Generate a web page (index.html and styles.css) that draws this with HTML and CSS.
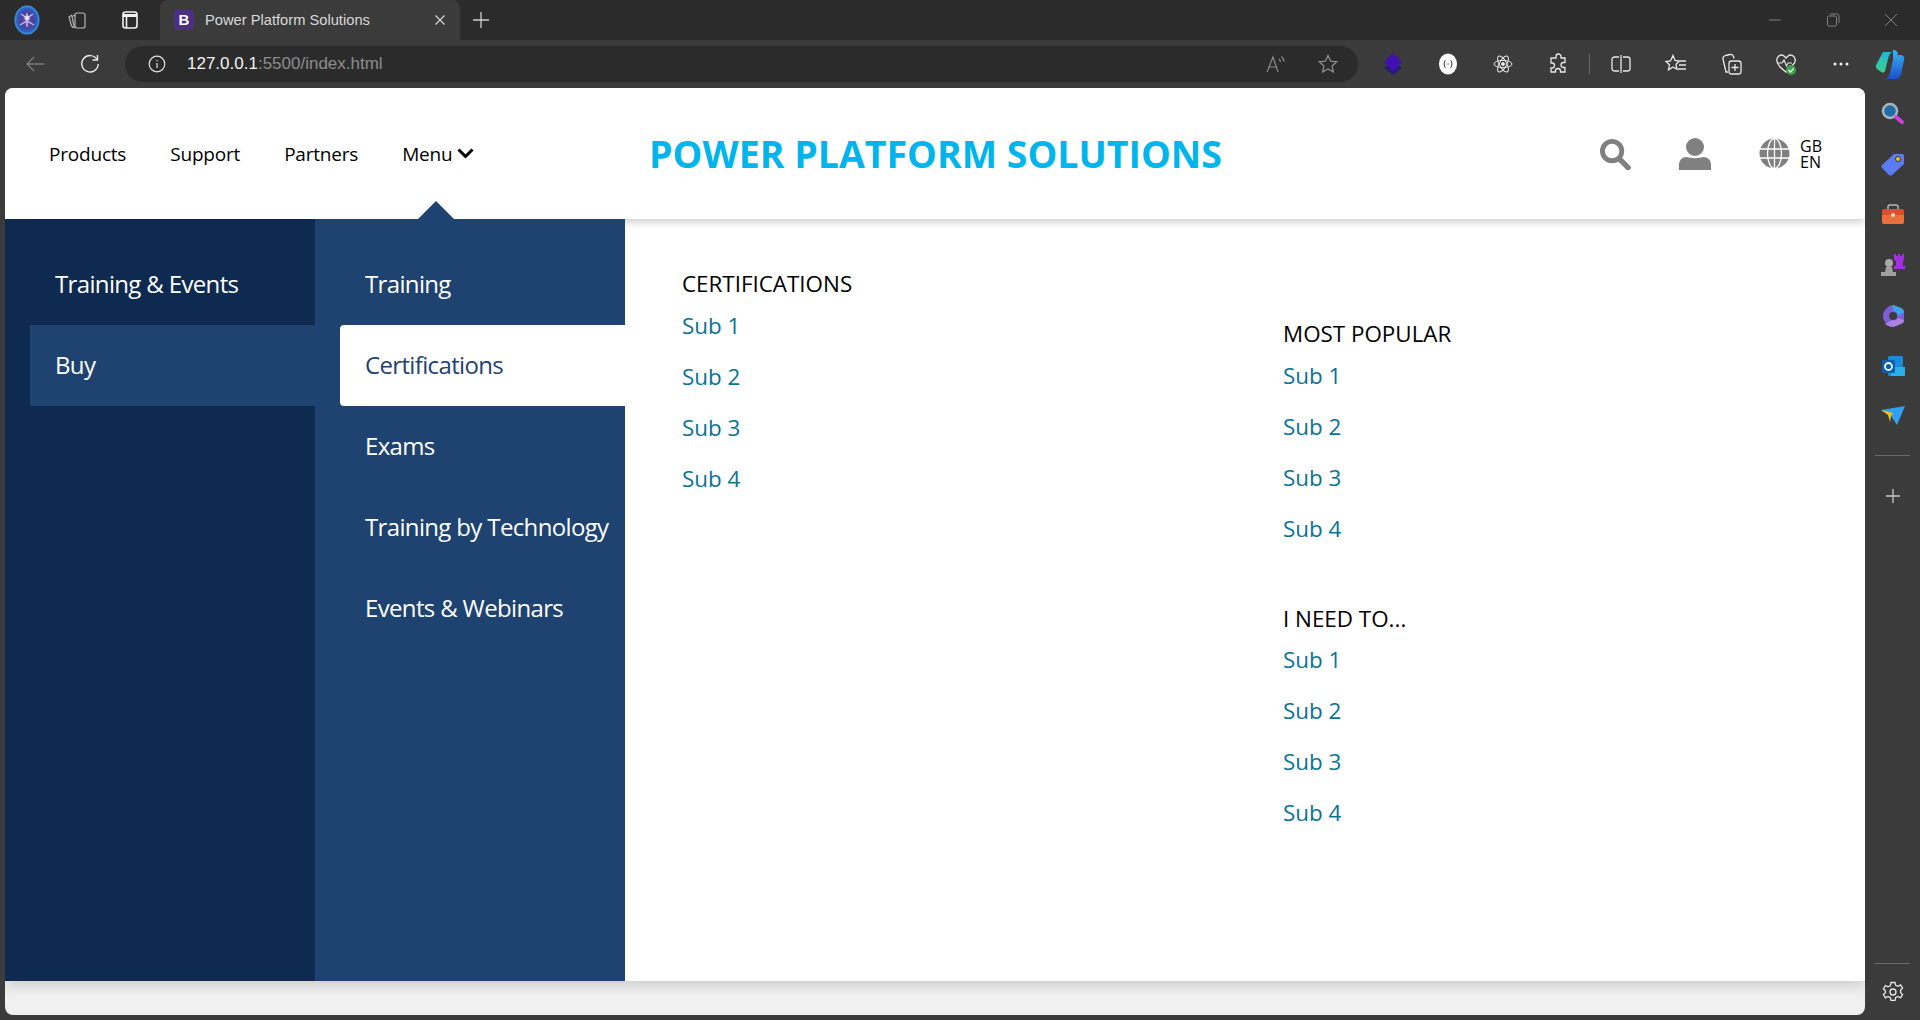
FILE: index.html
```html
<!DOCTYPE html>
<html lang="en">

<head>
    <meta charset="UTF-8">
    <meta name="viewport" content="width=device-width, initial-scale=1.0">
    <title>Power Platform Solutions</title>
    <link rel="stylesheet" href="styles.css">
</head>

<body>
    <div class="tabbar">
        <div class="tabbar-left">
            <svg class="avatar" width="26" height="30" viewBox="0 0 26 30">
                <defs>
                    <radialGradient id="av">
                        <stop offset="0" stop-color="#7a5ab0" />
                        <stop offset="0.5" stop-color="#4a3f9a" />
                        <stop offset="0.8" stop-color="#2b5fc0" />
                        <stop offset="1" stop-color="#3f9be8" />
                    </radialGradient>
                </defs>
                <ellipse cx="13" cy="15" rx="12.5" ry="14.5" fill="url(#av)" />
                <path d="M7 9l6 4 6-4M6 20l7-4 7 4M13 8v14" stroke="#c9bfe6" stroke-width="1.4" fill="none" />
                <circle cx="13" cy="13" r="2.500" fill="#e2dcf4" />
            </svg>
            <svg class="ti" width="20" height="22" viewBox="0 0 20 22" fill="none" stroke="#b5b5b5" stroke-width="1.2">
                <rect x="8" y="4" width="10" height="15" rx="2" />
                <path d="M8 6L5 7.500 7 17l1 2M5 6L2 8l2.500 9 2 2" />
            </svg>
            <svg class="ti" width="16" height="18" viewBox="0 0 16 18" fill="none" stroke="#f2f2f2" stroke-width="1.6">
                <rect x="1" y="1" width="14" height="16" rx="2.500" />
                <path d="M1 4.500h14" stroke-width="3" />
                <path d="M4.500 5v12" />
            </svg>
        </div>
        <div class="tab">
            <span class="tab-logo">B</span>
            <span class="tab-title">Power Platform Solutions</span>
            <svg width="12" height="12" viewBox="0 0 12 12" stroke="#d6d6d6" stroke-width="1.2">
                <path d="M1.500 1.500l9 9M10.500 1.500l-9 9" />
            </svg>
        </div>
        <svg class="newtab" width="18" height="18" viewBox="0 0 18 18" stroke="#d0d0d0" stroke-width="1.3">
            <path d="M9 1v16M1 9h16" />
        </svg>
        <div class="winbtns">
            <svg width="14" height="14" viewBox="0 0 14 14" stroke="#808080"><path d="M1 7h12" /></svg>
            <svg width="14" height="14" viewBox="0 0 14 14" stroke="#808080" fill="none">
                <rect x="1.500" y="3" width="9" height="10" rx="1.500" />
                <path d="M4 1h7a2 2 0 0 1 2 2v7" />
            </svg>
            <svg width="14" height="14" viewBox="0 0 14 14" stroke="#808080"><path d="M1 1l12 12M13 1L1 13" /></svg>
        </div>
    </div>

    <div class="toolbar">
        <svg class="back" width="20" height="18" viewBox="0 0 20 18" fill="none" stroke="#7c7c7c" stroke-width="1.3">
            <path d="M19 9H2M9 2L2 9l7 7" />
        </svg>
        <svg class="reload" width="20" height="20" viewBox="0 0 20 20" fill="none" stroke="#e8e8e8" stroke-width="1.4">
            <path d="M17 5.500A8.200 8.200 0 1 0 18.200 10" />
            <path d="M17.500 1v5h-5" />
        </svg>
        <div class="address">
            <svg width="18" height="18" viewBox="0 0 18 18" fill="none" stroke="#e0e0e0" stroke-width="1.2">
                <circle cx="9" cy="9" r="7.800" />
                <path d="M9 8v5M9 5v1.300" />
            </svg>
            <span class="url"><b>127.0.0.1</b>:5500/index.html</span>
            <span class="address-end">
                <svg width="22" height="20" viewBox="0 0 22 20" fill="none" stroke="#8a8a8a" stroke-width="1.2">
                    <path d="M1 18L7 3l5 15M3 13h7M13 5c1 1 1.500 2 1.500 3M15.500 2.500c1.500 1.500 2.500 3 2.500 5" />
                </svg>
                <svg width="20" height="20" viewBox="0 0 20 20" fill="none" stroke="#8a8a8a" stroke-width="1.3">
                    <path d="M10 1.500l2.600 5.600 6 .7-4.500 4.100 1.300 6L10 15l-5.400 2.900 1.300-6L1.400 7.800l6-.7z" />
                </svg>
            </span>
        </div>
        <div class="ext">
            <svg width="20" height="24" viewBox="0 0 20 24">
                <path d="M10 9l9 7-9 7-9-7z" fill="#261a78" />
                <path d="M10 1l9 9-9 9-9-9z" fill="#4310b0" />
            </svg>
            <svg width="20" height="22" viewBox="0 0 20 22">
                <ellipse cx="10" cy="11" rx="9" ry="10.500" fill="#fff" />
                <path d="M7.500 7.500c-1.500 0-.8 2.200-1.500 3.500.7 1.300 0 3.500 1.500 3.500M12.500 7.500c1.500 0 .8 2.200 1.500 3.500-.7 1.300 0 3.500-1.500 3.500" fill="none" stroke="#333" />
                <path d="M8.500 11h3" stroke="#666" stroke-dasharray="1 .5" />
            </svg>
            <svg width="20" height="20" viewBox="0 0 20 20" fill="none" stroke="#e8e8e8" stroke-width="1">
                <ellipse cx="10" cy="10" rx="9" ry="3.600" />
                <ellipse cx="10" cy="10" rx="9" ry="3.600" transform="rotate(60 10 10)" />
                <ellipse cx="10" cy="10" rx="9" ry="3.600" transform="rotate(120 10 10)" />
                <circle cx="10" cy="10" r="1.500" fill="#e8e8e8" />
            </svg>
            <svg width="20" height="22" viewBox="0 0 20 22" fill="none" stroke="#e8e8e8" stroke-width="1.3">
                <path d="M8 5V3.500a2.500 2.500 0 0 1 5 0V5h4v4.500h-1.500a2.500 2.500 0 0 0 0 5H17V19h-4.500v-1a2.500 2.500 0 0 0-5 0v1H3v-4h1a2.500 2.500 0 0 0 0-5H3V5z" />
            </svg>
            <span class="ext-sep"></span>
            <svg width="20" height="20" viewBox="0 0 20 20" fill="none" stroke="#e8e8e8" stroke-width="1.3">
                <path d="M8 3H3.500A2.500 2.500 0 0 0 1 5.500v9A2.500 2.500 0 0 0 3.500 17H8M12 3h4.500A2.500 2.500 0 0 1 19 5.500v9a2.500 2.500 0 0 1-2.500 2.500H12M10 1v18" />
            </svg>
            <svg class="wide" width="22" height="20" viewBox="0 0 22 20" fill="none" stroke="#e8e8e8" stroke-width="1.3">
                <path d="M8 1.500l2 5 4.500.5-3.500 3.300 1 5L8 13l-4.500 2.800 1-5L1 7.500 5.500 7zM15 7h6M14 11h7M13 15h8" />
            </svg>
            <svg class="wide" width="22" height="22" viewBox="0 0 22 22" fill="none" stroke="#e8e8e8" stroke-width="1.3">
                <path d="M8 19H6L3 6c-.5-2 1-3 2.500-3.500L10 1.500c1.500-.3 3 .5 3.500 2l.5 2" />
                <rect x="9" y="8" width="12" height="13" rx="2.500" />
                <path d="M15 11v7M11.500 14.500h7" />
            </svg>
            <svg class="wide" width="22" height="24" viewBox="0 0 22 24">
                <path d="M5 15L2.500 11C0 6 5 1 9 4l2 2 2-2c4-3 9 2 6.500 7L11 20z" fill="none" stroke="#e8e8e8" stroke-width="1.3" />
                <path d="M2 11h5l2-3 2.500 6 1.500-3h4" fill="none" stroke="#e8e8e8" stroke-width="1.100" />
                <circle cx="16" cy="18" r="5" fill="#3fa34d" />
                <path d="M13.500 18l2 2 3-3.500" fill="none" stroke="#fff" stroke-width="1.200" />
            </svg>
            <svg class="dots" width="16" height="4" viewBox="0 0 16 4" fill="#f0f0f0">
                <circle cx="2" cy="2" r="1.500" />
                <circle cx="8" cy="2" r="1.500" />
                <circle cx="14" cy="2" r="1.500" />
            </svg>
        </div>
        <svg class="copilot" width="30" height="30" viewBox="0 0 30 30">
            <defs>
                <linearGradient id="cpa" x1="0" y1="0" x2="0" y2="1">
                    <stop offset="0" stop-color="#1fb6d8" />
                    <stop offset="1" stop-color="#3fd08c" />
                </linearGradient>
                <linearGradient id="cpb" x1="0" y1="0" x2="0" y2="1">
                    <stop offset="0" stop-color="#3ab4f0" />
                    <stop offset="1" stop-color="#1a4fd0" />
                </linearGradient>
            </defs>
            <path d="M8 3h9c-2 1-3 3-4 7l-3 12c-.5 1.500-2 2-3.500 1C3 21 0 19 1 16z" fill="url(#cpa)" />
            <path d="M18 1c3 0 5 2 5 4l-1 1h3c3 0 5 2 4 5l-3 14c-1 3-3 5-6 5H11c2-1 3-3 4-6l3-13z" fill="url(#cpb)" />
        </svg>
    </div>

    <div class="main">
        <div class="page">
            <header class="site-header">
                <nav class="site-nav">
                    <a>Products</a>
                    <a>Support</a>
                    <a>Partners</a>
                    <a class="menu-link">Menu
                        <svg width="17" height="13" viewBox="0 0 17 13" fill="none" stroke="#000" stroke-width="3">
                            <path d="M1.500 2.500l7 7 7-7" />
                        </svg>
                    </a>
                </nav>
                <h1 class="site-title">POWER PLATFORM SOLUTIONS</h1>
                <div class="site-tools">
                    <svg width="32" height="32" viewBox="0 0 33 32" fill="none" stroke="#808080">
                        <circle cx="13.500" cy="13" r="10" stroke-width="5" />
                        <path d="M21 21l9 9" stroke-width="5.500" stroke-linecap="round" />
                    </svg>
                    <svg width="32" height="32" viewBox="0 0 32 32" fill="#808080">
                        <circle cx="16" cy="9" r="9" />
                        <path d="M0 32v-5c0-5 3-8 8-8 3 1.500 13 1.500 16 0 5 0 8 3 8 8v5z" />
                    </svg>
                    <span class="lang">
                        <svg width="31" height="31" viewBox="0 0 31 31" fill="#808080">
                            <circle cx="15.500" cy="15.500" r="15" />
                            <g fill="none" stroke="#fff" stroke-width="1.300">
                                <ellipse cx="15.500" cy="15.500" rx="7" ry="15" />
                                <path d="M15.500 0v31M1 11h29M1 20h29" />
                            </g>
                        </svg>
                        <span class="lang-text">GB<br>EN</span>
                    </span>
                </div>
            </header>

            <div class="menu-panel">
                <span class="menu-arrow"></span>
                <ul class="col-one">
                    <li>Training &amp; Events</li>
                    <li class="active">Buy</li>
                </ul>
                <ul class="col-two">
                    <li>Training</li>
                    <li class="active">Certifications</li>
                    <li>Exams</li>
                    <li>Training by Technology</li>
                    <li>Events &amp; Webinars</li>
                </ul>
                <div class="col-content">
                    <div class="sub-col">
                        <section class="sub-group">
                            <h2>CERTIFICATIONS</h2>
                            <a>Sub 1</a>
                            <a>Sub 2</a>
                            <a>Sub 3</a>
                            <a>Sub 4</a>
                        </section>
                    </div>
                    <div class="sub-col sub-col-right">
                        <section class="sub-group">
                            <h2>MOST POPULAR</h2>
                            <a>Sub 1</a>
                            <a>Sub 2</a>
                            <a>Sub 3</a>
                            <a>Sub 4</a>
                        </section>
                        <section class="sub-group">
                            <h2>I NEED TO...</h2>
                            <a>Sub 1</a>
                            <a>Sub 2</a>
                            <a>Sub 3</a>
                            <a>Sub 4</a>
                        </section>
                    </div>
                </div>
            </div>
        </div>

        <aside class="sidebar">
            <svg width="24" height="24" viewBox="0 0 24 24" fill="none">
                <circle cx="9" cy="9" r="7" fill="#1f6da8" stroke="#a8b4bc" stroke-width="2.500" />
                <path d="M15 15l6 5" stroke="#d040e0" stroke-width="4" stroke-linecap="round" />
            </svg>
            <svg width="24" height="24" viewBox="0 0 24 24">
                <path d="M13 2h8a2 2 0 0 1 2 2v8L11 23c-1 1-2 .500-3 0L1 16c-1-1-1-2 0-3z" fill="#5b7cf0" />
                <circle cx="17" cy="7" r="2.500" fill="#f2c230" stroke="#333" />
            </svg>
            <svg width="24" height="22" viewBox="0 0 24 22">
                <path d="M7 5V3a2 2 0 0 1 2-2h6a2 2 0 0 1 2 2v2" fill="none" stroke="#b8b8b8" stroke-width="1.500" />
                <path d="M1 7a2 2 0 0 1 2-2h18a2 2 0 0 1 2 2v4H1z" fill="#d8502c" />
                <path d="M1 11h22v7a2 2 0 0 1-2 2H3a2 2 0 0 1-2-2z" fill="#e9703c" />
                <circle cx="12" cy="11" r="2" fill="#d6d6d6" />
            </svg>
            <svg width="24" height="24" viewBox="0 0 24 24">
                <path d="M14 1h2v2h2V1h2v2h2V1h2v6l-1 1v5h2v3H14v-3h2V8l-2-1z" fill="#a030e0" transform="translate(-1 0)" />
                <circle cx="8" cy="10" r="4" fill="#a8a8a8" />
                <path d="M5 14h6l1 5h3v4H0v-4h4z" fill="#a0a0a0" />
            </svg>
            <svg width="22" height="24" viewBox="0 0 22 24">
                <path d="M11 1l8 3c2 1 3 2 3 4v8c0 2-1 3-3 4l-8 3c-5-1-10-5-10-11S6 2 11 1z" fill="#7a5fd6" />
                <path d="M11 1l8 3c2 1 3 2 3 4l-6 4c0-3-2-5-5-5z" fill="#38a8e8" />
                <path d="M22 16c0 2-1 3-3 4l-8 3c-4 0-8-3-8-3l8-4c2 1 4 0 5-2z" fill="#b080e0" />
                <circle cx="11" cy="12" r="4" fill="#3b3b3b" />
            </svg>
            <svg width="24" height="22" viewBox="0 0 24 22">
                <rect x="7" y="1" width="15" height="20" rx="1.500" fill="#1c8ad8" />
                <path d="M10 12h14v8a1 1 0 0 1-1 1H10z" fill="#28b0e8" />
                <rect x="1" y="5" width="13" height="13" rx="1.500" fill="#0a60b0" />
                <circle cx="7.500" cy="11.500" r="3.500" fill="none" stroke="#fff" stroke-width="1.800" />
            </svg>
            <svg width="24" height="20" viewBox="0 0 24 20">
                <path d="M0 4L24 0 16 19 10 10z" fill="#30a0f0" />
                <path d="M0 4l12 3-2 3-1 6-2-7z" fill="#f0c020" />
            </svg>
            <span class="sidebar-sep"></span>
            <svg class="side-add" width="16" height="16" viewBox="0 0 16 16" stroke="#c8c8c8" stroke-width="1.300">
                <path d="M8 1v14M1 8h14" />
            </svg>
            <span class="sidebar-sep sidebar-sep-low"></span>
            <svg width="22" height="22" viewBox="0 0 22 22" fill="none" stroke="#e8e8e8" stroke-width="1.300">
                <path d="M9 1.500h4l.7 2.800 2.400 1 2.500-1.400 2 3.300-2 1.900v2.600l2 1.900-2 3.300-2.500-1.400-2.400 1-.7 2.800H9l-.7-2.800-2.400-1-2.500 1.400-2-3.300 2-1.900V9.700l-2-1.900 2-3.300 2.500 1.400 2.400-1z" />
                <circle cx="11" cy="11" r="3" />
            </svg>
        </aside>
    </div>
</body>

</html>
```

FILE: styles.css
```css
* {
    box-sizing: border-box;
}

html,
body {
    height: 100%;
}

body {
    margin: 0;
    background-color: #3b3b3b;
    font-family: "Open Sans", sans-serif;
    display: flex;
    flex-direction: column;
    overflow: hidden;
}

svg {
    flex: none;
    display: block;
}

/* browser chrome */
.tabbar {
    height: 40px;
    background-color: #2b2b2b;
    display: flex;
    align-items: center;
    flex: none;
}

.tabbar-left {
    width: 160px;
    display: flex;
    align-items: center;
    padding-left: 14px;
    gap: 27px;
}

.tabbar-left .ti:last-child {
    margin-left: 8px;
}

.tab {
    width: 300px;
    height: 40px;
    background-color: #3b3b3b;
    border-radius: 8px 8px 0 0;
    display: flex;
    align-items: center;
    padding: 0 14px 0 14px;
    color: #d8d8d8;
    font-family: "Liberation Sans", sans-serif;
    font-size: 14.7px;
}

.tab-logo {
    width: 20px;
    height: 20px;
    background-color: #4c2f7f;
    border-radius: 4px;
    color: #fff;
    font-weight: bold;
    font-size: 15px;
    line-height: 20px;
    text-align: center;
    margin-right: 11px;
}

.tab-title {
    flex: 1;
}

.newtab {
    margin-left: 12px;
}

.winbtns {
    margin-left: auto;
    display: flex;
    align-items: center;
    gap: 44px;
    padding-right: 22px;
}

.toolbar {
    height: 48px;
    flex: none;
    display: flex;
    align-items: center;
    padding-left: 25px;
}

.reload {
    margin-left: 35px;
}

.address {
    margin-left: 25px;
    width: 1233px;
    height: 36px;
    border-radius: 18px;
    background-color: #2b2b2b;
    display: flex;
    align-items: center;
    padding: 0 20px 0 23px;
    font-family: "Liberation Sans", sans-serif;
    font-size: 17px;
    color: #8d8d8d;
}

.url {
    margin-left: 21px;
}

.url b {
    font-weight: normal;
    color: #f2f2f2;
}

.address-end {
    margin-left: auto;
    display: flex;
    align-items: center;
    gap: 30px;
}

.ext {
    display: flex;
    align-items: center;
    margin-left: 25px;
    gap: 35px;
}

.ext .wide {
    margin: 0 -1px;
}

.ext .dots {
    margin: 0 2px;
}

.ext-sep {
    width: 1px;
    height: 20px;
    background-color: #6a6a6a;
    margin: 0 -14px;
}

.copilot {
    margin-left: 24px;
}

.main {
    flex: 1;
    display: flex;
    min-height: 0;
}

/* page */
.page {
    flex: 1;
    min-width: 0;
    margin: 0 0 5px 5px;
    background-color: #f0f0f0;
    border-radius: 8px;
    overflow: hidden;
    display: flex;
    flex-direction: column;
}

.site-header {
    height: 131px;
    flex: none;
    background-color: #fff;
    display: flex;
    align-items: center;
    padding-left: 44px;
    box-shadow: 0 3px 8px rgba(0, 0, 0, 0.2);
    position: relative;
    z-index: 1;
}

.site-nav {
    width: 600px;
    display: flex;
    gap: 44px;
    font-size: 19px;
    letter-spacing: -0.2px;
    color: #000;
}

.menu-link {
    display: flex;
    align-items: center;
    gap: 5px;
}

.site-title {
    margin: 0;
    font-size: 37.5px;
    font-weight: 700;
    color: #00b5ec;
}

.site-tools {
    margin-left: auto;
    display: flex;
    align-items: center;
    gap: 48px;
    padding-right: 43px;
}

.lang {
    display: flex;
    align-items: center;
    gap: 10px;
}

.lang-text {
    font-size: 16px;
    line-height: 16px;
}

.menu-panel {
    flex: none;
    height: 762px;
    display: flex;
    position: relative;
    background-color: #fff;
    box-shadow: 0 3px 14px rgba(0, 0, 0, 0.18);
    font-size: 24px;
    letter-spacing: -0.65px;
}

.menu-arrow {
    position: absolute;
    z-index: 2;
    left: 413px;
    top: -18px;
    border-left: 18px solid transparent;
    border-right: 18px solid transparent;
    border-bottom: 18px solid #1f4370;
}

.col-one,
.col-two {
    list-style: none;
    margin: 0;
    padding: 25px 0 0 25px;
    width: 310px;
    flex: none;
    color: #fff;
    position: relative;
    z-index: 2;
}

.col-one {
    background-color: #0e2a50;
}

.col-two {
    background-color: #1f4370;
}

.col-one li,
.col-two li {
    height: 81px;
    line-height: 80px;
    padding-left: 25px;
    white-space: nowrap;
}

.col-one li.active {
    background-color: #1f4370;
}

.col-two li.active {
    background-color: #fff;
    color: #1f4370;
    border-radius: 4px 0 0 4px;
}

.col-content {
    flex: 1;
    display: flex;
    padding: 50px 0 0 57px;
    letter-spacing: 0;
}

.sub-col {
    width: 601px;
    flex: none;
}

.sub-col-right {
    padding-top: 50px;
}

.sub-group {
    display: flex;
    flex-direction: column;
    margin-bottom: 60px;
}

.sub-group h2 {
    margin: 0 0 11.5px;
    font-size: 22.4px;
    font-weight: 400;
    line-height: 30px;
    color: #000;
}

.sub-group a {
    font-size: 22.4px;
    line-height: 30px;
    margin-bottom: 21px;
    color: #0a7396;
}

.sub-group a:last-child {
    margin-bottom: 0;
}

/* right edge bar */
.sidebar {
    width: 55px;
    flex: none;
    display: flex;
    flex-direction: column;
    align-items: center;
    padding-top: 14px;
    gap: 26.4px;
}

.sidebar svg {
    height: 24px;
}

.sidebar-sep {
    width: 35px;
    height: 1px;
    background-color: #6a6a6a;
    margin: 0 0 2px;
}

.sidebar-sep-low {
    margin-top: auto;
    margin-bottom: -10px;
}

.sidebar svg:last-child {
    margin-bottom: 16px;
}
```
